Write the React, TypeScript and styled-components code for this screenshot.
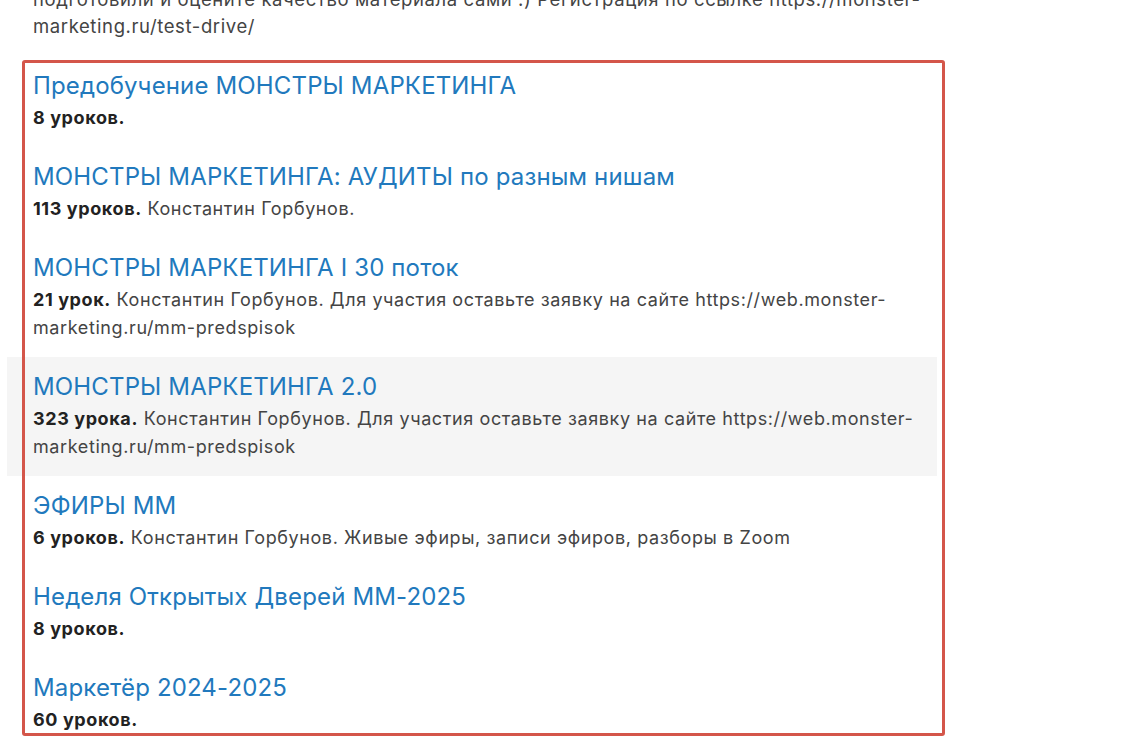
import React from "react";
import styled, { createGlobalStyle } from "styled-components";

const GlobalStyle = createGlobalStyle`
  html, body {
    margin: 0;
    padding: 0;
    background: #ffffff;
  }
  body {
    font-family: Inter, "Noto Sans", "Liberation Sans", sans-serif;
    color: #444444;
    overflow: hidden;
  }
`;

interface Course {
  id: number;
  title: string;
  lessons: string;
  description?: string;
}

const courses: Course[] = [
  { id: 1, title: "Предобучение МОНСТРЫ МАРКЕТИНГА", lessons: "8 уроков." },
  {
    id: 2,
    title: "МОНСТРЫ МАРКЕТИНГА: АУДИТЫ по разным нишам",
    lessons: "113 уроков.",
    description: "Константин Горбунов.",
  },
  {
    id: 3,
    title: "МОНСТРЫ МАРКЕТИНГА I 30 поток",
    lessons: "21 урок.",
    description:
      "Константин Горбунов. Для участия оставьте заявку на сайте https://web.monster-marketing.ru/mm-predspisok",
  },
  {
    id: 4,
    title: "МОНСТРЫ МАРКЕТИНГА 2.0",
    lessons: "323 урока.",
    description:
      "Константин Горбунов. Для участия оставьте заявку на сайте https://web.monster-marketing.ru/mm-predspisok",
  },
  {
    id: 5,
    title: "ЭФИРЫ ММ",
    lessons: "6 уроков.",
    description: "Константин Горбунов. Живые эфиры, записи эфиров, разборы в Zoom",
  },
  { id: 6, title: "Неделя Открытых Дверей ММ-2025", lessons: "8 уроков." },
  { id: 7, title: "Маркетёр 2024-2025", lessons: "60 уроков." },
];

const Page = styled.div`
  width: 930px;
  margin-left: 7px;
`;

const Intro = styled.p`
  margin: -14px 0 0;
  padding: 0 26px;
  font-size: 18.5px;
  line-height: 27px;
  letter-spacing: 0.6px;
  color: #444444;
  white-space: nowrap;
`;

const CourseList = styled.ul`
  position: relative;
  list-style: none;
  margin: 16px 0 0;
  padding: 0;
`;

const CourseItem = styled.li<{ $active?: boolean }>`
  padding: 12px 14px 15px 26px;
  background: ${({ $active }) => ($active ? "#f5f5f5" : "transparent")};
`;

const CourseTitle = styled.a`
  display: block;
  font-size: 24px;
  line-height: 36px;
  letter-spacing: 0.15px;
  color: #2179bd;
  text-decoration: none;
`;

const CourseMeta = styled.div`
  font-size: 18px;
  line-height: 28px;
  letter-spacing: 0.6px;
  color: #444444;
`;

const LessonCount = styled.strong`
  font-weight: 700;
  color: #222222;
`;

// highlight frame drawn over the list
const Frame = styled.div`
  position: absolute;
  left: 15px;
  top: 4px;
  width: 917px;
  height: 670px;
  border: 3px solid #d4564a;
  border-radius: 3px;
  pointer-events: none;
`;

const App = () => {
  return (
    <>
      <GlobalStyle />
      <Page>
        <Intro>
          подготовили и оцените качество материала сами :) Регистрация по ссылке https://monster-
          <br />
          marketing.ru/test-drive/
        </Intro>
        <CourseList>
          {courses.map((course) => (
            <CourseItem key={course.id} $active={course.id === 4}>
              <CourseTitle href="#">{course.title}</CourseTitle>
              <CourseMeta>
                <LessonCount>{course.lessons}</LessonCount>
                {course.description ? ` ${course.description}` : null}
              </CourseMeta>
            </CourseItem>
          ))}
          <Frame />
        </CourseList>
      </Page>
    </>
  );
};

export default App;
